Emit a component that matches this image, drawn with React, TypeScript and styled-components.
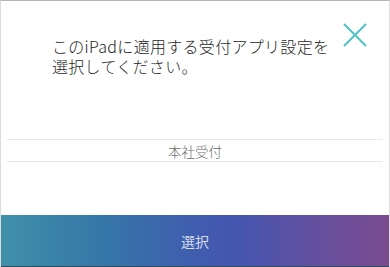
import React from "react";
import styled, { createGlobalStyle } from "styled-components";

const GlobalStyle = createGlobalStyle`
  html, body {
    margin: 0;
    padding: 0;
    background: #ffffff;
  }
  body {
    font-family: "Liberation Sans", "Noto Sans CJK JP", sans-serif;
  }
`;

const Frame = styled.div`
  box-sizing: border-box;
  width: 390px;
  height: 267px;
  display: flex;
  flex-direction: column;
  background: #ffffff;
  border-top: 1px solid #b4b4b4;
  border-left: 1px solid #dcdcdc;
  border-right: 1px solid #dcdcdc;
  overflow: hidden;
`;

const Header = styled.header`
  display: flex;
  align-items: flex-start;
  justify-content: space-between;
  padding: 0 22px 0 51px;
`;

const Title = styled.h1`
  margin: 35px 0 0;
  font-family: "Liberation Sans", "Noto Sans CJK JP", sans-serif;
  font-size: 16px;
  font-weight: 300;
  letter-spacing: 0.3px;
  color: #262626;
`;

const TitleLine = styled.span`
  display: block;
  height: 21px;
  line-height: 21px;
  white-space: nowrap;
`;

const Latin = styled.span`
  font-family: "Noto Sans CJK JP", sans-serif;
  font-weight: 300;
`;

const CloseButton = styled.button`
  margin-top: 22px;
  width: 24px;
  height: 24px;
  padding: 0;
  border: none;
  background: transparent;
  display: flex;
  align-items: center;
  justify-content: center;
  cursor: pointer;
`;

const Body = styled.main`
  flex: 1;
  padding: 61px 6px 0;
`;

const OptionList = styled.ul`
  list-style: none;
  margin: 0;
  padding: 0;
  border-top: 1px solid #e8e8e8;
`;

const Option = styled.li`
  height: 21px;
  display: flex;
  align-items: center;
  justify-content: center;
  border-bottom: 1px solid #e8e8e8;
  font-family: "Noto Sans CJK JP", sans-serif;
  font-size: 13.5px;
  font-weight: 300;
  color: #6c6c6c;
`;

const SelectButton = styled.button`
  box-sizing: border-box;
  width: calc(100% + 2px);
  margin: 0 -1px;
  height: 52px;
  border: none;
  border-bottom: 1px solid #2d4a5e;
  background: linear-gradient(
    90deg,
    #3f90a9 0%,
    #3577a8 26%,
    #3f5fae 48%,
    #4456b0 60%,
    #6250a0 80%,
    #7b4b8f 100%
  );
  color: rgba(255, 255, 255, 0.78);
  font-family: "Noto Sans CJK JP", sans-serif;
  font-size: 14px;
  cursor: pointer;
`;

function CloseIcon() {
  return (
    <svg width="24" height="24" viewBox="0 0 24 24">
      <path d="M1 1 L23 23 M23 1 L1 23" stroke="#4ec3c8" strokeWidth="2" fill="none" />
    </svg>
  );
}

export default function App() {
  return (
    <>
      <GlobalStyle />
      <Frame>
        <Header>
          <Title>
            <TitleLine>
              この<Latin>iPad</Latin>に適用する受付アプリ設定を
            </TitleLine>
            <TitleLine>選択してください。</TitleLine>
          </Title>
          <CloseButton aria-label="閉じる">
            <CloseIcon />
          </CloseButton>
        </Header>
        <Body>
          <OptionList>
            <Option>本社受付</Option>
          </OptionList>
        </Body>
        <SelectButton>選択</SelectButton>
      </Frame>
    </>
  );
}
